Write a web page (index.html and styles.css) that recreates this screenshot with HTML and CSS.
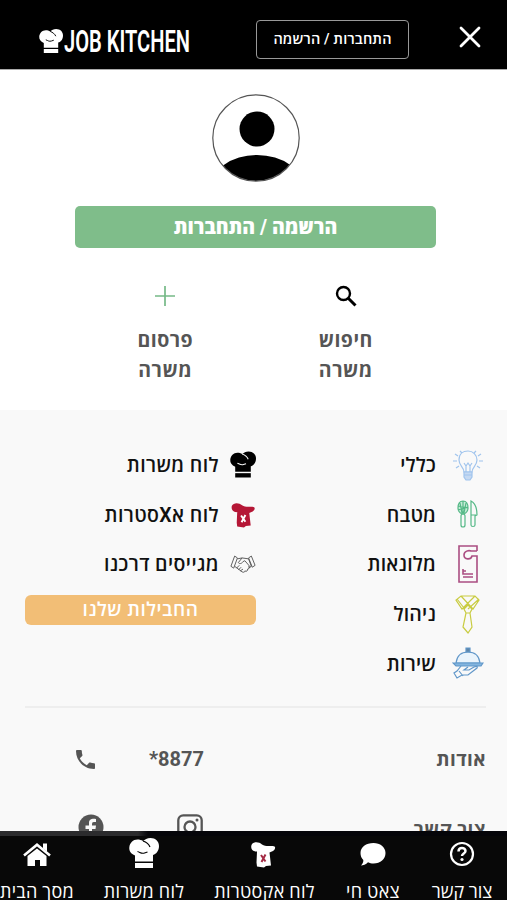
FILE: index.html
```html
<!DOCTYPE html>
<html lang="he" dir="rtl">
<head>
<meta charset="utf-8">
<title>Job Kitchen</title>
<link rel="stylesheet" href="styles.css">
</head>
<body>
<svg class="defs" width="0" height="0">
  <symbol id="chef" viewBox="0 0 30 30">
    <path d="M6 23.500V17.500C2 16 0 13 .3 9.500.8 5 4 1.500 8.500 1.500c2 0 4 .5 5.500 1.500 2-1.500 4-3 7.500-3C26.500 0 30 3.500 30 8c0 4.500-2.500 8-6 9v6.500z" fill="currentColor"/>
    <path d="M6 25h18v5H6z" fill="currentColor"/>
    <path class="crease" d="M8.500 13.500c3 1 4 2.500 7 1.500l3-1M14 3c3 1 6 3.500 7 6" fill="none" stroke-width="1.200"/>
  </symbol>
  <symbol id="extra" viewBox="0 0 26 28">
    <path d="M7 11.500C2 12 .5 8 1.500 5 3 1.500 9 1.500 12 4.500c3 2 6 1.500 10 1.500 4-.5 4 3 1 5l-3.500 1.500 1.500 13-5 .5-2 1.500-7-1-.5-4z" fill="currentColor"/>
    <path class="cross" d="M11 15l4.500 6.500M15.500 14.500l-4 7.500" fill="none" stroke-width="2"/>
  </symbol>
</svg>
<div class="screen">
  <header class="top">
    <svg class="close" viewBox="0 0 22 22"><path d="M2 2l18 18M20 2L2 20"/></svg>
    <a class="login">התחברות / הרשמה</a>
    <div class="logo" dir="ltr">
      <svg class="logo-hat"><use href="#chef"/></svg>
      <svg class="logo-text" viewBox="0 0 127 38"><text x="0" y="30" textLength="126" lengthAdjust="spacingAndGlyphs">JOB KITCHEN</text></svg>
    </div>
  </header>

  <section class="profile">
    <svg class="avatar" viewBox="0 0 88 88">
      <clipPath id="face"><circle cx="44" cy="44" r="43"/></clipPath>
      <circle cx="45" cy="35" r="17.500"/>
      <ellipse cx="45" cy="95" rx="47" ry="34" clip-path="url(#face)"/>
      <circle class="ring" cx="44" cy="44" r="43.200"/>
    </svg>
    <a class="register">הרשמה / התחברות</a>
    <div class="actions">
      <a class="action">
        <svg viewBox="0 0 22 22"><circle cx="8.500" cy="8.500" r="6.500" fill="none" stroke="#000" stroke-width="2.400"/><path d="M13 13l7.500 7.500" stroke="#000" stroke-width="3"/></svg>
        <span>חיפוש<br>משרה</span>
      </a>
      <a class="action">
        <svg viewBox="0 0 22 22"><path d="M11 1v20M1 11h20" stroke="#75b987" stroke-width="1.700"/></svg>
        <span>פרסום<br>משרה</span>
      </a>
    </div>
  </section>

  <main class="menu">
    <div class="columns">
      <div class="column">
        <a class="row general"><svg viewBox="0 0 32 36"><path d="M12 25c0-5-5-6-5-12C7 7 11 4 16 4s9 4 9 9c0 6-5 7-5 12zM12 16l2 3 2-3 2 3 2-3M14 19v6M18 19v6"/><path d="M12 25h8v5l-2 3h-4l-2-3zM12 28h8" fill="#c5d9f2"/><path d="M3 7l3 2M1 14h4M4 21l3-2M29 7l-3 2M31 14h-4M28 21l-3-2M8 4l2 2M24 4l-2 2"/></svg><span>כללי</span></a>
        <a class="row kitchen"><svg viewBox="0 0 32 36"><path d="M11 5c-4 0-5 3-5 7 0 3 2 5 4 6h2c2-1 4-3 4-6 0-4-1-7-5-7zM11 5v13M8 7l2 10M14 7l-2 10M6 10l10 2M6 14l10-3" fill="#c5ebd7"/><rect x="9" y="18" width="4" height="13" rx="2"/><path d="M19 5v24c0 2 4 2 4 0V20l2-1c0-7-2-12-6-14zM19 19h5"/></svg><span>מטבח</span></a>
        <a class="row hotel"><svg viewBox="0 0 32 38"><path d="M25 6V1H7v36h18V11h-5c-1 4-8 4-8-1 0-4 5-5 7-4h6M11 24v5h5M11 26h3M11 29h10M11 32h10"/></svg><span>מלונאות</span></a>
        <a class="row manage"><svg viewBox="0 0 32 40"><path d="M9 2h14l4 4-6 9-5-5-6 5-6-9zM5 5l7 9M9 2l12 13M27 5L16 15M23 2L12 13M12 15l4-4 4 4-2 4h-4zM14 19l-3 14 5 6 4-6-2-14z"/></svg><span>ניהול</span></a>
        <a class="row service"><svg viewBox="0 0 32 34"><path d="M4 17C5 9 10 6 16 6s11 3 12 11z" fill="#eaf4fc"/><path d="M14 2h4v4h-4z" fill="#5f86a8"/><path d="M1 17h30l-2 3H4z" fill="#83b5df"/><path d="M9 20l-4 5-3 2 3 5 5-3h6l9-7c1-2-1-2-3-1l-5 3h-5l4-3M7 25l4 5"/></svg><span>שירות</span></a>
      </div>
      <div class="column second">
        <a class="row jobs"><svg><use href="#chef"/></svg><span>לוח משרות</span></a>
        <a class="row extras"><svg><use href="#extra"/></svg><span>לוח אXסטרות</span></a>
        <a class="row hiring"><svg viewBox="0 0 28 22"><path d="M5 3L1 14l3 2L8 5zM23 3l4 10-3 2-4-10zM8 6l5-1 7 1 3 8-3 2M13 5l-4 5c1 2 4 1 5-1l2-1 6 7M5 14l8 6c2 1 3 0 3-1 2 1 3 0 3-2 2 0 2-2 1-3M7 16l3-3M9 18l3-3M11 19l3-2"/></svg><span>מגייסים דרכנו</span></a>
        <a class="packages">החבילות שלנו</a>
      </div>
    </div>
    <div class="info">
      <span class="about">אודות</span>
      <span class="number" dir="ltr">*8877</span>
      <svg class="phone" viewBox="3 3 18 18"><path d="M6.620 10.790c1.440 2.830 3.760 5.140 6.590 6.590l2.200-2.200c.27-.27.67-.36 1.020-.24 1.120.37 2.330.57 3.570.57.55 0 1 .45 1 1V20c0 .55-.45 1-1 1C10.610 21 3 13.390 3 4c0-.55.45-1 1-1h3.500c.55 0 1 .45 1 1 0 1.250.2 2.450.57 3.570.11.35.03.74-.25 1.020z"/></svg>
    </div>
    <div class="info social">
      <span class="about">צור קשר</span>
      <svg class="instagram" viewBox="0 0 26 26"><rect x="1.300" y="1.300" width="23.400" height="23.400" rx="5"/><circle cx="13" cy="13" r="5.500"/><circle class="dot" cx="20" cy="6" r="1.500"/></svg>
      <svg class="facebook" viewBox="0 0 26 26"><circle cx="13" cy="13" r="12.500"/><path d="M11 21v-6H7.500v-3.500H11V9c0-4 3-4.500 7-4v3h-2c-2 0-2 1-2 3.500h4L17.500 15H14v6z" fill="#f9f9f9"/></svg>
    </div>
  </main>

  <nav class="bar">
    <a class="tab contact"><svg viewBox="0 0 26 26"><circle cx="13" cy="13" r="11" fill="none" stroke="#fff" stroke-width="2.200"/><path d="M9.500 10.500c0-5 7-4.500 7-.5 0 2.500-3.500 2.500-3.500 5" fill="none" stroke="#fff" stroke-width="2.500"/><circle cx="13" cy="18.500" r="1.600" fill="#fff"/></svg><span>צור קשר</span></a>
    <a class="tab chat"><svg viewBox="0 0 26 26"><path d="M13.500 2C20 2 25.500 6 25.500 12s-5 10.500-12 10.500c-2 0-4-.4-5.500-1.200C6 23.500 3 24.500 1 24.500c2-2 2.500-4 2.300-5.500C1.500 17 .5 15 .5 12 .5 6 6 2 13.500 2z" fill="#fff"/></svg><span>צאט חי</span></a>
    <a class="tab xtra"><svg><use href="#extra"/></svg><span>לוח אקסטרות</span></a>
    <a class="tab board"><svg><use href="#chef"/></svg><span>לוח משרות</span></a>
    <a class="tab home"><svg viewBox="0 0 28 26"><path d="M14 7.500L23.500 15v10H17v-6h-5v6H4.500V15z" fill="#fff"/><path d="M1 14.500L14 3.800l13 10.700" fill="none" stroke="#fff" stroke-width="2.600"/><path d="M20 2.500h4v8l-4-3z" fill="#fff"/></svg><span>מסך הבית</span></a>
  </nav>
</div>
</body>
</html>
```
FILE: styles.css
```css
* { box-sizing: border-box; }
body { margin: 0; font-family: Roboto, "Open Sans", "DejaVu Sans", sans-serif; background: #fff; overflow: hidden; }
.defs { position: absolute; }
.screen { width: 507px; height: 900px; display: flex; flex-direction: column; overflow: hidden; }
svg { display: block; flex: none; }
span, a { white-space: nowrap; }

.top { flex: none; height: 70px; background: #000; border-bottom: 1px solid #aaa; display: flex; align-items: center; padding: 10px 26px 0 39px; }
.close { width: 22px; height: 22px; margin-bottom: 5px; fill: none; stroke: #fff; stroke-width: 2.8; stroke-linecap: round; }
.login { width: 153px; height: 39px; margin-right: 50px; border: 1px solid #999; border-radius: 4px; color: #fff; font-size: 14.5px; font-weight: 600; line-height: 37px; text-align: center; letter-spacing: 0.1px; }
.logo { margin-right: auto; display: flex; align-items: center; --crease: #000; }
.logo-hat { width: 24px; height: 24px; margin: 3px 1px 0 0; color: #fff; }
.logo-text { width: 127px; height: 40px; margin-top: 2px; }
.logo-text text { fill: #fff; font: 600 31px Roboto, sans-serif; }
.crease { stroke: var(--crease); }

.profile { flex: none; height: 340px; padding: 24px 0 0 4px; display: flex; flex-direction: column; align-items: center; }
.avatar { width: 88px; height: 88px; }
.ring { fill: none; stroke: #555; stroke-width: 1.2; }
.register { width: 361px; height: 42px; margin-top: 24px; border-radius: 5px; background: #7fbd8a; color: #fff; font-size: 19.5px; font-weight: 800; line-height: 44px; text-align: center; }
.actions { width: 361px; display: flex; margin-top: 37px; }
.action { flex: 1; display: flex; flex-direction: column; align-items: center; color: #555; font-size: 19.5px; font-weight: 700; letter-spacing: 0.5px; line-height: 30px; text-align: center; }
.action svg { width: 22px; height: 22px; margin-bottom: 19px; }

.menu { flex: 1; min-height: 0; overflow: hidden; background: #f9f9f9; padding: 30px 21px 0 25px; }
.columns { display: grid; grid-template-columns: 230px 231px; height: 268px; border-bottom: 2px solid #eee; }
.row { display: flex; align-items: center; height: 49.6px; color: #111; font-size: 19.5px; font-weight: 600; letter-spacing: 0.2px; }
.second .row { letter-spacing: 0.4px; }
.row svg { width: 32px; height: 36px; margin: 0 2px 0 16px; fill: none; stroke-width: 1.2; }
.general svg { stroke: #a0c4ed; }
.kitchen svg { stroke: #54b886; }
.hotel svg { height: 40px; stroke: #ab4e82; stroke-width: 1.6; }
.manage svg { height: 40px; stroke: #c9cc42; }
.service svg { stroke: #6197c9; }
.second .row svg { width: 26px; height: 27px; margin: 0 0 0 11px; }
.jobs { --crease: #f9f9f9; }
.jobs svg { color: #000; }
.extras { --cross: #fff; }
.extras svg { color: #b51736; }
.cross { stroke: var(--cross); }
.hiring svg { stroke: #555; stroke-width: 1; }
.packages { display: block; width: 231px; height: 30px; margin-top: 6px; border-radius: 6px; background: #f2be76; color: #fff; font-size: 19px; font-weight: 600; letter-spacing: 0.5px; line-height: 29px; text-align: center; }
.info { display: grid; grid-template-columns: 230px 101px 130px; align-items: center; height: 52px; margin-top: 25px; color: #555; font-size: 19px; font-weight: 700; letter-spacing: 0.4px; }
.number { justify-self: end; width: 54px; margin-left: -6px; font-size: 20px; letter-spacing: 0; }
.phone { width: 19px; height: 19px; fill: #555; margin-right: 60px; }
.social { height: 26px; margin-top: 27px; }
.social .about { padding-top: 4px; }
.instagram { width: 26px; height: 26px; margin-right: 53px; fill: none; stroke: #555; stroke-width: 2.3; }
.instagram .dot { fill: #555; stroke: none; }
.facebook { width: 26px; height: 26px; margin-right: 51px; fill: #555; }

.bar { flex: none; height: 69px; background: linear-gradient(to right, #2b2b2d 138px, #050509 148px) top / 100% 5px no-repeat #080808; display: flex; gap: 30px; padding: 9px 15px 0 0; color: #fff; font-size: 18px; letter-spacing: 0.3px; --crease: #000; --cross: #a52b45; }
.tab { flex: none; display: flex; flex-direction: column; align-items: center; }
.tab svg { width: 26px; height: 28px; }
.tab span { line-height: 24px; margin-top: 12px; }
.contact { width: 60px; letter-spacing: 0; }
.chat { width: 54px; margin-right: 2px; }
.xtra { width: 101px; margin-right: 1px; }
.board { width: 80px; }
.home { width: 74px; }
.tab.board svg { width: 30px; height: 30px; margin: -2px 0 0; }
.tab.xtra svg { color: #fff; margin-right: 4px; }
.home svg { width: 28px; }
```
